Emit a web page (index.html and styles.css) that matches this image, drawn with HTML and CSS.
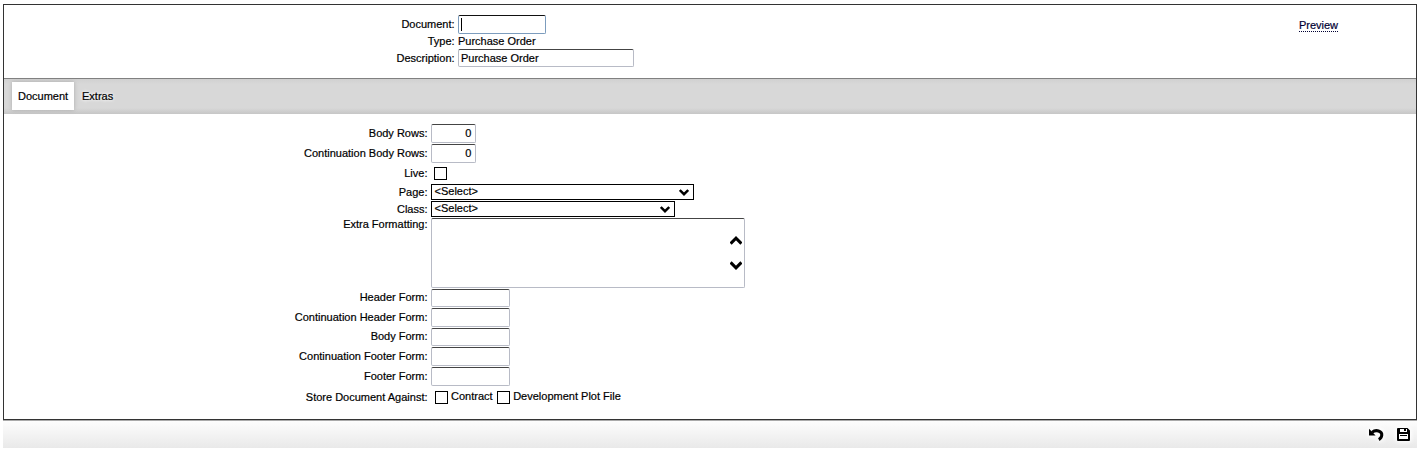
FILE: index.html
```
<!DOCTYPE html>
<html lang="en">
<head>
<meta charset="utf-8">
<title>Document</title>
<link rel="stylesheet" href="styles.css">
</head>
<body>
<main class="panel">
  <header class="head">
    <div class="head-fields">
      <div class="row"><span class="label">Document:</span><div class="input focus"><i class="caret"></i></div></div>
      <div class="row type"><span class="label">Type:</span><span>Purchase Order</span></div>
      <div class="row"><span class="label">Description:</span><div class="input desc">Purchase Order</div></div>
    </div>
    <a class="preview">Preview</a>
  </header>
  <nav class="tabs"><span class="tab active">Document</span><span class="tab">Extras</span></nav>
  <section class="form">
    <div class="row"><span class="label">Body Rows:</span><div class="input num">0</div></div>
    <div class="row"><span class="label">Continuation Body Rows:</span><div class="input num">0</div></div>
    <div class="row live"><span class="label">Live:</span><i class="check"></i></div>
    <div class="row short"><span class="label">Page:</span><div class="select page">&lt;Select&gt;<svg class="arrow" viewBox="0 0 10 7"><path d="M.8 1L5 5.2L9.2 1"/></svg></div></div>
    <div class="row short"><span class="label">Class:</span><div class="select">&lt;Select&gt;<svg class="arrow" viewBox="0 0 10 7"><path d="M.8 1L5 5.2L9.2 1"/></svg></div></div>
    <div class="row area"><span class="label">Extra Formatting:</span><div class="input textarea"><svg class="scroll" viewBox="0 0 12 9"><path d="M.6 7.6L6 2.2L11.4 7.6"/></svg><svg class="scroll" viewBox="0 0 12 9"><path d="M.6 1.4L6 6.8L11.4 1.4"/></svg></div></div>
    <div class="row code-row"><span class="label">Header Form:</span><div class="input code"></div></div>
    <div class="row code-row"><span class="label">Continuation Header Form:</span><div class="input code"></div></div>
    <div class="row code-row"><span class="label">Body Form:</span><div class="input code"></div></div>
    <div class="row code-row"><span class="label">Continuation Footer Form:</span><div class="input code"></div></div>
    <div class="row code-row"><span class="label">Footer Form:</span><div class="input code"></div></div>
    <div class="row store"><span class="label">Store Document Against:</span><div class="options"><i class="check"></i><span>Contract</span><i class="check"></i><span>Development Plot File</span></div></div>
  </section>
</main>
<footer class="bar">
  <svg class="icon undo" viewBox="0 0 16 13"><path class="stroke" d="M4 4.4C8 1 14.2 3 13.8 7.2C13.6 9.4 12.6 10.6 10.8 11.6"/><path d="M1 .8L1 7.4L7.6 7.4Z"/></svg>
  <svg class="icon save" viewBox="0 0 13 13"><path fill-rule="evenodd" d="M1 0H10.5L13 2.5V12Q13 13 12 13H1Q0 13 0 12V1Q0 0 1 0ZM3 1V4H10V1H9V3H7V1ZM2 6V11H11V6Z"/><path d="M3 7H10V8H3Z"/></svg>
</footer>
</body>
</html>
```
FILE: styles.css
```
* { box-sizing: border-box; }
body {
  margin: 0;
  padding: 4px 2px 0 3px;
  height: 452px;
  overflow: hidden;
  background: #fff;
  color: #000;
  font: 11px/13px "Liberation Sans", Arial, sans-serif;
  -webkit-text-stroke: 0.2px currentColor;
}
.panel {
  height: 416px;
  border: 1px solid #333;
  box-shadow: 0 1px 0 #999;
}
.head {
  display: flex;
  justify-content: space-between;
  height: 73px;
  padding: 10px 78px 0 0;
}
.preview {
  align-self: flex-start;
  margin-top: 4px;
  color: #003;
  border-bottom: 1px dotted #003;
  line-height: 12px;
}
.row {
  display: grid;
  grid-template-columns: 423.5px auto;
  column-gap: 3.5px;
  justify-content: start;
  height: 19.6px;
}
.head .row {
  grid-template-columns: 450.6px auto;
  column-gap: 3.4px;
  height: 19px;
}
.head .row.type { height: 15px; }
.label { text-align: right; padding-top: 3px; }
.type .label { padding-top: 1px; }
.type span { padding-top: 1px; }
.input {
  height: 19px;
  border: 1px solid #b8bbc6;
  border-top-color: #444;
  border-radius: 2px;
  padding: 2px;
}
.focus {
  width: 88px;
  border-color: #7c9cbd;
  border-top-color: #111;
}
.caret { display: block; width: 1px; height: 13px; background: #000; }
.desc { width: 176px; height: 18px; }
.num { width: 45px; text-align: right; padding: 2px 3.6px; }
.code { width: 79px; height: 18.6px; }
.tabs {
  display: flex;
  height: 36px;
  padding: 3px 8px;
  border-top: 1px solid #808080;
  background: linear-gradient(#d0d0d0, #d8d8d8 5px, #d8d8d8 29px, #c6c6c6);
}
.tab {
  height: 28px;
  padding: 8px 7px 0 8px;
  text-shadow: 0 0 4px #fff, 0 0 3px #fff;
}
.active {
  width: 62px;
  padding-left: 6px;
  background: #fff;
  box-shadow: 0 0 4px #aaa;
}
.form { padding-top: 10px; }
.row.live { height: 20.8px; }
.row.short { height: 17px; }
.row.area { height: 70.6px; }
.check {
  width: 13px;
  height: 13px;
  border: 1px solid #000;
}
.live .check { margin: 4px 0 0 3px; }
.live .label { padding-top: 4px; }
.select {
  display: flex;
  justify-content: space-between;
  width: 244px;
  height: 16px;
  padding: 0 4px 0 2.5px;
  border: 1px solid #000;
}
.page { width: 263px; }
.short .label { padding-top: 2px; }
.area .label { padding-top: 0; }
.arrow { width: 10px; height: 7px; margin-top: 4px; fill: none; stroke: #000; stroke-width: 2.4; }
.textarea {
  display: flex;
  flex-direction: column;
  align-items: flex-end;
  gap: 16px;
  width: 314px;
  height: 70px;
  padding-top: 17px;
}
.scroll { width: 12px; height: 9px; fill: none; stroke: #000; stroke-width: 3; }
.code-row .label { padding-top: 2.7px; }
.store .label { padding-top: 4.4px; }
.options { display: flex; gap: 3px; padding: 4px 0 0 4px; }
.options span { margin-top: -0.6px; }
.options span + .check { margin-left: 1.6px; }
.bar {
  display: flex;
  justify-content: flex-end;
  height: 28px;
  padding: 7px 7px 0 0;
  border-top: 1px solid #aaa;
  background: linear-gradient(#fdfdfd, #e9e9e9);
}
.icon { filter: drop-shadow(0 0 2px #fff) drop-shadow(0 0 2px #fff); }
.undo { width: 16px; height: 13px; margin-right: 13px; }
.save { width: 13px; height: 13px; }
.stroke { fill: none; stroke: #000; stroke-width: 3; }
```
